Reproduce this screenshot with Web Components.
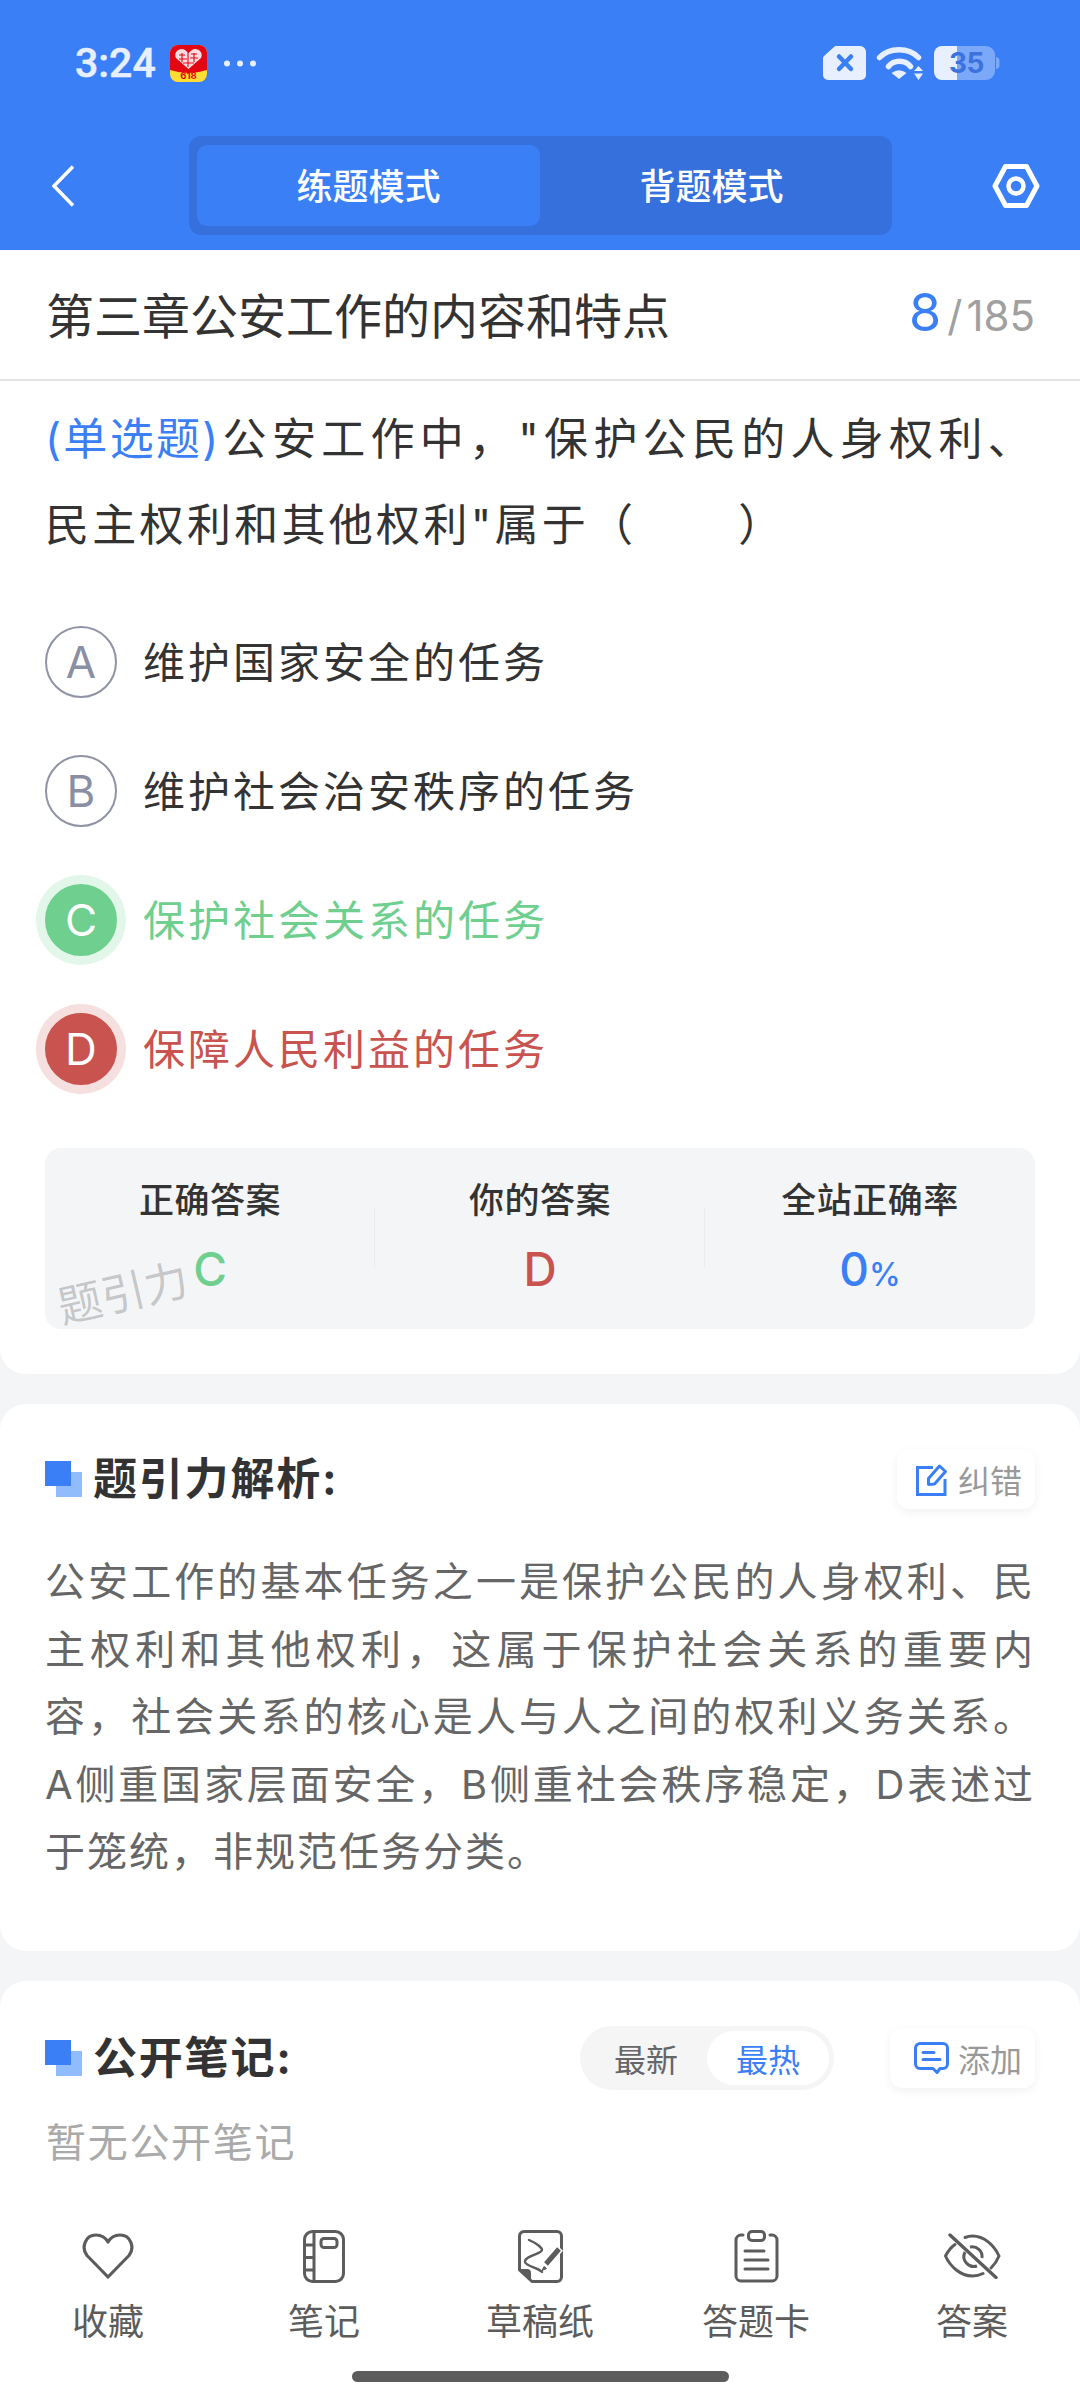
<!DOCTYPE html>
<html lang="zh">
<head>
<meta charset="utf-8">
<title>练题模式</title>
<style>
  html, body { margin: 0; padding: 0; }
  body {
    width: 1080px;
    height: 2400px;
    overflow: hidden;
    display: flex;
    flex-direction: column;
    background: #f4f5f7;
    font-family: Inter, "Noto Sans CJK SC", sans-serif;
    color: #333;
  }
  main { flex: 1; display: flex; flex-direction: column; gap: 30px; min-height: 0; }
  .grow { flex: 1; }
  .q-line { display: block; }
  .q-line.first { text-align-last: justify; }
  .q-type { display: inline-block; color: #3b7ff7; letter-spacing: 2.3px; }
</style>
</head>
<body>
<app-header></app-header>
<chapter-bar current="8" total="185">第三章公安工作的内容和特点</chapter-bar>
<main>
  <question-card>
    <span slot="question" class="q-line first"><span class="q-type">(单选题)</span><span>公安工作中，"保护公民的人身权利、</span></span>
    <span slot="question" class="q-line">民主权利和其他权利"属于（　　&#8202;）</span>
    <answer-option letter="A">维护国家安全的任务</answer-option>
    <answer-option letter="B">维护社会治安秩序的任务</answer-option>
    <answer-option letter="C" state="right">保护社会关系的任务</answer-option>
    <answer-option letter="D" state="wrong">保障人民利益的任务</answer-option>
    <answer-stats slot="stats"></answer-stats>
  </question-card>
  <analysis-card></analysis-card>
  <notes-card class="grow"></notes-card>
</main>
<tool-bar></tool-bar>

<script>
// Status bar and mode switch
class AppHeader extends HTMLElement {
  constructor() {
    super();
    this.attachShadow({ mode: 'open' });
  }

  connectedCallback() {
    this.shadowRoot.innerHTML = `
      <style>
        :host { display: block; height: 250px; background: #3b7ff7; color: #fff; }
        .status {
          height: 136px;
          box-sizing: border-box;
          padding: 46px 80px 0 75px;
          display: flex;
          align-items: flex-start;
        }
        .time {
          font: 500 41px/34px Roboto, sans-serif;
          color: #e8effe;
          width: 95px;
          -webkit-text-stroke: 0.5px #e8effe;
        }
        .app { display: block; margin-top: -1px; }
        .dots { margin: 14px 0 0 17px; display: block; }
        .right { margin-left: auto; display: flex; gap: 10px; align-items: flex-start; }
        .batt { position: relative; width: 66px; height: 34px; }
        .batt b {
          position: absolute;
          left: 15px;
          top: 0;
          font: 700 28px/34px Inter, sans-serif;
          color: #3b72dd;
          letter-spacing: -0.5px;
        }
        nav { display: flex; align-items: center; height: 99px; padding: 0 40px 0 52px; }
        .seg {
          width: 703px;
          height: 99px;
          box-sizing: border-box;
          padding: 9px 9px 9px 8px;
          background: #3570dc;
          border-radius: 12px;
          display: grid;
          grid-template-columns: 1fr 1fr;
        }
        .seg div {
          display: flex;
          align-items: center;
          justify-content: center;
          box-sizing: border-box;
          padding-bottom: 3px;
          font-size: 36px;
          font-weight: 500;
          border-radius: 10px;
        }
        .seg .on { background: #3b7ff7; }
        .gear { margin-left: auto; display: block; }
      </style>
      <div class="status">
        <span class="time">3:24</span>
        <svg class="app" width="37" height="37" viewBox="0 0 37 37">
          <rect width="37" height="37" rx="8" fill="#ffdd33"/>
          <path d="M0 8a8 8 0 0 1 8-8h21a8 8 0 0 1 8 8v17q-18 6-37 0z" fill="#e30613"/>
          <path d="M18.500 24 6 13c-3-6 4-11 9-8l3.500 3 3.500-3c5-3 12 2 9 8z" fill="#fbdde0"/>
          <path d="M9 10h6M9 14h8M21 9h6M20 13h8M13 18h11M18 7v15M12 8v9M24 8v9" stroke="#e30613" stroke-width="1.100" fill="none"/>
          <text x="18.500" y="34" text-anchor="middle" font-family="Inter, sans-serif" font-size="9.500" font-weight="700" fill="#e30613">618</text>
        </svg>
        <svg class="dots" width="32" height="7" viewBox="0 0 32 7" fill="#e8effe">
          <circle cx="3" cy="3.500" r="3"/><circle cx="16" cy="3.500" r="3"/><circle cx="29" cy="3.500" r="3"/>
        </svg>
        <div class="right">
          <svg width="43" height="34" viewBox="0 0 43 34">
            <path d="M13 0H37a6 6 0 0 1 6 6V29a5 5 0 0 1-5 5H5a5 5 0 0 1-5-5V12a3 3 0 0 1 1-2L11 1a3 3 0 0 1 2-1z" fill="#e8effe"/>
            <path d="M16 10.500 28 23M28 10.500 16 23" stroke="#3b7ff7" stroke-width="4.500" stroke-linecap="round"/>
          </svg>
          <svg width="48" height="34" viewBox="0 0 48 34" fill="none" stroke="#e8effe" stroke-linecap="round">
            <path d="M3.500 11.500C13 1 33 1 42.500 11.500" stroke-width="5.500"/>
            <path d="M12.500 20.500C18 13.500 29 13.500 34.500 20.500" stroke-width="5.500"/>
            <path d="M15.500 27Q23 21.500 30.500 27L23 33z" fill="#e8effe" stroke="none"/>
            <path d="M42.500 20 47 25H38zM42.500 34 47 27.500H38z" fill="#e8effe" stroke="none"/>
          </svg>
          <div class="batt">
            <svg width="66" height="34" viewBox="0 0 66 34" style="display:block">
              <path d="M23 0H52a9 9 0 0 1 9 9V25a9 9 0 0 1-9 9H23z" fill="#7ca8fa"/>
              <path d="M62 11a4 4 0 0 1 3.500 4v4a4 4 0 0 1-3.500 4z" fill="#7ca8fa"/>
              <path d="M8 0H23V34H8a8 8 0 0 1-8-8V8a8 8 0 0 1 8-8z" fill="#e8effe"/>
            </svg>
            <b>35</b>
          </div>
        </div>
      </div>
      <nav>
        <svg width="22" height="42" viewBox="0 0 22 42" style="flex:none;margin-right:115px">
          <path d="M21 1.500 2 21 21 40.500" fill="none" stroke="#fff" stroke-width="3.500"/>
        </svg>
        <div class="seg">
          <div class="on">练题模式</div>
          <div>背题模式</div>
        </div>
        <svg class="gear" width="48" height="44" viewBox="0 0 48 44" fill="none" stroke="#fff">
          <path d="M13.500 2.500H34.500L45 22 34.500 41.500H13.500L3 22z" stroke-width="5" stroke-linejoin="round"/>
          <circle cx="24" cy="22" r="7.500" stroke-width="4.500"/>
        </svg>
      </nav>
    `;
  }
}

// Chapter title with question counter
class ChapterBar extends HTMLElement {
  constructor() {
    super();
    this.attachShadow({ mode: 'open' });
  }

  connectedCallback() {
    this.shadowRoot.innerHTML = `
      <style>
        :host {
          display: flex;
          align-items: center;
          justify-content: space-between;
          box-sizing: border-box;
          height: 131px;
          padding: 0 45px 4px 46px;
          background: #fff;
          border-bottom: 2px solid #e4e4e4;
        }
        .title { font-size: 48px; color: #333; }
        .count { display: flex; align-items: baseline; font-size: 42px; color: #a0a0a0; }
        .count b { font-weight: 400; font-size: 52px; color: #3b7ff7; margin-right: 6px; }
        .count i { font-style: normal; margin-right: 4px; }
      </style>
      <span class="title"><slot></slot></span>
      <span class="count"><b>${this.getAttribute('current')}</b><i>/</i><span>${this.getAttribute('total')}</span></span>
    `;
  }
}

// Question text, options and result box
class QuestionCard extends HTMLElement {
  constructor() {
    super();
    this.attachShadow({ mode: 'open' });
  }

  connectedCallback() {
    this.shadowRoot.innerHTML = `
      <style>
        :host {
          display: block;
          padding: 15px 45px 45px;
          background: #fff;
          border-radius: 0 0 26px 26px;
        }
        .question {
          font-size: 44px;
          line-height: 86px;
          letter-spacing: 3.300px;
          color: #333;
          margin: 0 0 29px;
        }
        .options { display: block; margin-bottom: 35px; }
      </style>
      <div class="question"><slot name="question"></slot></div>
      <div class="options"><slot></slot></div>
      <slot name="stats"></slot>
    `;
  }
}

class AnswerOption extends HTMLElement {
  constructor() {
    super();
    this.attachShadow({ mode: 'open' });
  }

  connectedCallback() {
    this.shadowRoot.innerHTML = `
      <style>
        :host {
          display: flex;
          align-items: center;
          gap: 26px;
          height: 129px;
          font-size: 42px;
          letter-spacing: 3px;
          color: #333;
        }
        .text { padding-bottom: 4px; }
        .mark {
          flex: none;
          width: 72px;
          height: 72px;
          box-sizing: border-box;
          border: 2px solid #8f93a5;
          border-radius: 50%;
          display: flex;
          align-items: center;
          justify-content: center;
          font-size: 44px;
          letter-spacing: 0;
          color: #8a8fa3;
        }
        :host([state="right"]) { color: #6ecf8e; }
        :host([state="right"]) .mark {
          background: #6ecf8e;
          border-color: #6ecf8e;
          color: #fff;
          box-shadow: 0 0 0 9px #e3f6ea;
        }
        :host([state="wrong"]) { color: #c9534f; }
        :host([state="wrong"]) .mark {
          background: #c9534f;
          border-color: #c9534f;
          color: #fff;
          box-shadow: 0 0 0 9px #f6dfdf;
        }
      </style>
      <span class="mark">${this.getAttribute('letter')}</span>
      <span class="text"><slot></slot></span>
    `;
  }
}

class AnswerStats extends HTMLElement {
  constructor() {
    super();
    this.attachShadow({ mode: 'open' });
  }

  connectedCallback() {
    this.shadowRoot.innerHTML = `
      <style>
        :host {
          display: grid;
          grid-template-columns: repeat(3, 1fr);
          position: relative;
          height: 181px;
          background: #f4f5f7;
          border-radius: 16px;
        }
        .col {
          position: relative;
          display: flex;
          flex-direction: column;
          align-items: center;
          padding-top: 30px;
        }
        .col + .col::before {
          content: "";
          position: absolute;
          left: -1px;
          top: 60px;
          height: 59px;
          width: 1px;
          background: #e9ebee;
        }
        .label { font-size: 35px; line-height: 44px; letter-spacing: 0.5px; font-weight: 500; color: #333; }
        .value { font-size: 46px; line-height: 56px; margin-top: 19px; font-weight: 500; }
        .value small { font-size: 32px; }
        .mark {
          position: absolute;
          left: 12px;
          top: 117px;
          font-size: 44px;
          line-height: 56px;
          color: rgba(0, 0, 0, 0.2);
          transform: rotate(-13deg);
        }
      </style>
      <div class="col"><span class="label">正确答案</span><span class="value" style="color:#6ecf8e">C</span></div>
      <div class="col"><span class="label">你的答案</span><span class="value" style="color:#c9534f">D</span></div>
      <div class="col"><span class="label">全站正确率</span><span class="value" style="color:#3b7ff7">0<small>%</small></span></div>
      <span class="mark">题引力</span>
    `;
  }
}

// Shared section heading: two overlapping squares and a title
class SectionTitle extends HTMLElement {
  constructor() {
    super();
    this.attachShadow({ mode: 'open' });
  }

  connectedCallback() {
    this.shadowRoot.innerHTML = `
      <style>
        :host {
          display: flex;
          align-items: center;
          gap: 11px;
          height: 60px;
          font-size: 44px;
          line-height: 60px;
          font-weight: 700;
          letter-spacing: 1.800px;
          color: #333;
        }
        .sq { position: relative; width: 37px; height: 36px; flex: none; }
        .sq::before, .sq::after { content: ""; position: absolute; width: 26px; height: 25px; }
        .sq::after { left: 0; top: 0; background: #3b7ff7; }
        .sq::before { right: 0; bottom: 0; background: #90bcfb; }
      </style>
      <span class="sq"></span><span><slot></slot></span>
    `;
  }
}

class ActionButton extends HTMLElement {
  constructor() {
    super();
    this.attachShadow({ mode: 'open' });
  }

  connectedCallback() {
    this.shadowRoot.innerHTML = `
      <style>
        :host {
          display: flex;
          align-items: center;
          justify-content: flex-end;
          gap: 9px;
          box-sizing: border-box;
          height: 60px;
          padding-right: 13px;
          background: #fff;
          border-radius: 12px;
          box-shadow: 0 3px 10px rgba(0, 0, 0, 0.06);
          font-size: 32px;
          color: #999;
        }
        ::slotted(svg) { display: block; }
      </style>
      <slot name="icon"></slot><span><slot></slot></span>
    `;
  }
}

class AnalysisCard extends HTMLElement {
  constructor() {
    super();
    this.attachShadow({ mode: 'open' });
  }

  connectedCallback() {
    this.shadowRoot.innerHTML = `
      <style>
        :host {
          display: block;
          padding: 45px 45px 65px;
          background: #fff;
          border-radius: 26px;
        }
        .head { display: flex; align-items: center; justify-content: space-between; }
        .fix { width: 138px; }
        p {
          margin: 39px 0 0;
          font-size: 40px;
          line-height: 67.500px;
          letter-spacing: 2px;
          text-align: justify;
          color: #666;
        }
      </style>
      <div class="head">
        <section-title>题引力解析:</section-title>
        <action-button class="fix">
          <svg slot="icon" width="33" height="33" viewBox="0 0 33 33" fill="none" stroke="#3b7ff7" stroke-width="3">
            <path d="M17 4.500H1.500V31.500H29V16"/>
            <path d="M12.500 15.500 23.500 3 29.500 8.500 18.500 21 12.500 21.500z" stroke-linejoin="round"/>
          </svg>
          纠错
        </action-button>
      </div>
      <p>公安工作的基本任务之一是保护公民的人身权利、民主权利和其他权利，这属于保护社会关系的重要内容，社会关系的核心是人与人之间的权利义务关系。A侧重国家层面安全，B侧重社会秩序稳定，D表述过于笼统，非规范任务分类。</p>
    `;
  }
}

class NotesCard extends HTMLElement {
  constructor() {
    super();
    this.attachShadow({ mode: 'open' });
  }

  connectedCallback() {
    this.shadowRoot.innerHTML = `
      <style>
        :host {
          display: block;
          padding: 45px 45px 0;
          background: #fff;
          border-radius: 26px 26px 0 0;
        }
        .head { display: flex; align-items: center; height: 64px; }
        .sort {
          margin-left: auto;
          width: 254px;
          height: 64px;
          box-sizing: border-box;
          padding: 5px;
          background: #f5f5f5;
          border-radius: 32px;
          display: grid;
          grid-template-columns: 122px 122px;
          font-size: 32px;
          color: #666;
        }
        .sort span { display: flex; align-items: center; justify-content: center; border-radius: 27px; }
        .sort .on { background: #fff; color: #3b7ff7; }
        .add { width: 145px; margin-left: 56px; }
        .empty { margin: 23px 0 0 1px; font-size: 40px; line-height: 60px; letter-spacing: 1.700px; color: #aaa; }
      </style>
      <div class="head">
        <section-title>公开笔记:</section-title>
        <div class="sort"><span>最新</span><span class="on">最热</span></div>
        <action-button class="add">
          <svg slot="icon" width="35" height="32" viewBox="0 0 35 32" fill="none" stroke="#3b7ff7" stroke-width="3">
            <path d="M6 1.500H29A4.500 4.500 0 0 1 33.500 6V22A4.500 4.500 0 0 1 29 26.500H26L23 30.500 19 26.500H6A4.500 4.500 0 0 1 1.500 22V6A4.500 4.500 0 0 1 6 1.500z" stroke-linejoin="round"/>
            <path d="M9 10.500H20M9 17.500H26" stroke-linecap="round"/>
          </svg>
          添加
        </action-button>
      </div>
      <div class="empty">暂无公开笔记</div>
    `;
  }
}

// Bottom tools
class ToolItem extends HTMLElement {
  constructor() {
    super();
    this.attachShadow({ mode: 'open' });
  }

  connectedCallback() {
    this.shadowRoot.innerHTML = `
      <style>
        :host {
          display: flex;
          flex-direction: column;
          align-items: center;
          font-size: 36px;
          color: #5c5c5c;
        }
        .ico { height: 54px; display: flex; align-items: center; justify-content: center; }
        .txt { margin-top: 15px; line-height: 48px; }
        ::slotted(svg) { display: block; }
      </style>
      <div class="ico"><slot name="icon"></slot></div>
      <span class="txt"><slot></slot></span>
    `;
  }
}

class ToolBar extends HTMLElement {
  constructor() {
    super();
    this.attachShadow({ mode: 'open' });
  }

  connectedCallback() {
    this.shadowRoot.innerHTML = `
      <style>
        :host {
          display: block;
          flex: none;
          height: 200px;
          box-sizing: border-box;
          padding-top: 29px;
          background: #fff;
        }
        .items { display: grid; grid-template-columns: repeat(5, 216px); }
        .home { width: 377px; height: 11px; margin: 25px auto 0; border-radius: 6px; background: #5c5c5c; }
      </style>
      <div class="items">
        <tool-item>
          <svg slot="icon" width="52" height="46" viewBox="0 0 52 46" fill="none" stroke="#5c5c5c" stroke-width="3.200">
            <path d="M26 44 5 22.500C-1 15 3 2 14 2 20 2 24 5.500 26 9 28 5.500 32 2 38 2 49 2 53 15 47 22.500z" stroke-linejoin="round"/>
          </svg>
          收藏
        </tool-item>
        <tool-item>
          <svg slot="icon" width="42" height="53" viewBox="0 0 42 53" fill="none" stroke="#5c5c5c" stroke-width="3">
            <rect x="1.500" y="1.500" width="39" height="50" rx="8"/>
            <path d="M11 2V51M1.500 15H11M1.500 27.500H11M1.500 40H11"/>
            <rect x="18" y="8.500" width="16" height="9" rx="3"/>
          </svg>
          笔记
        </tool-item>
        <tool-item>
          <svg slot="icon" width="45" height="53" viewBox="0 0 45 53" fill="none" stroke="#5c5c5c" stroke-width="3">
            <path d="M6 1.500H39A4.500 4.500 0 0 1 43.500 6V47A4.500 4.500 0 0 1 39 51.500H14L1.500 40V6A4.500 4.500 0 0 1 6 1.500z" stroke-linejoin="round"/>
            <path d="M2 39H9A4 4 0 0 1 13 43V50z" fill="#5c5c5c" stroke="none"/>
            <path d="M11 10C20 14 24 18 24 20 24 24 6 26 7 32 8 36 20 38 24 42" stroke-width="2.400" stroke-linecap="round"/>
            <path d="M42 18 27 35" stroke="#fff" stroke-width="8"/>
            <path d="M41 19 28 34" stroke-width="5"/>
            <path d="M26 36.500 24 40.500 28.500 38.500z" fill="#5c5c5c" stroke-width="1"/>
          </svg>
          草稿纸
        </tool-item>
        <tool-item>
          <svg slot="icon" width="45" height="53" viewBox="0 0 45 53" fill="none" stroke="#5c5c5c" stroke-width="3">
            <path d="M9 5H7A5 5 0 0 0 2 10V46A5 5 0 0 0 7 51H38A5 5 0 0 0 43 46V10A5 5 0 0 0 38 5H36" stroke-linecap="round"/>
            <rect x="14.500" y="1.500" width="16" height="9" rx="3.500"/>
            <path d="M11 21H30M11 30H34M11 39H34" stroke-linecap="round"/>
          </svg>
          答题卡
        </tool-item>
        <tool-item>
          <svg slot="icon" width="57" height="46" viewBox="0 0 57 46" fill="none" stroke="#5c5c5c" stroke-width="3">
            <path d="M6 2 52 44.500" stroke-width="3.400" stroke-linecap="round"/>
            <path d="M11 11.500C6 15 3.500 19 1.500 23 6 33 16 43 28.500 43 33 43 36 42 39 40.500" stroke-linecap="round"/>
            <path d="M21 4.500C23.500 3.500 26 3 28.500 3 40 3 50 12 55 23 53 28 50 32 47 35" stroke-linecap="round"/>
            <path d="M21 19A10 10 0 0 0 33 33"/>
            <path d="M26 14A10 10 0 0 1 38 25"/>
          </svg>
          答案
        </tool-item>
      </div>
      <div class="home"></div>
    `;
  }
}

// Define Custom Elements
customElements.define('app-header', AppHeader);
customElements.define('chapter-bar', ChapterBar);
customElements.define('question-card', QuestionCard);
customElements.define('answer-option', AnswerOption);
customElements.define('answer-stats', AnswerStats);
customElements.define('section-title', SectionTitle);
customElements.define('action-button', ActionButton);
customElements.define('analysis-card', AnalysisCard);
customElements.define('notes-card', NotesCard);
customElements.define('tool-item', ToolItem);
customElements.define('tool-bar', ToolBar);
</script>
</body>
</html>
